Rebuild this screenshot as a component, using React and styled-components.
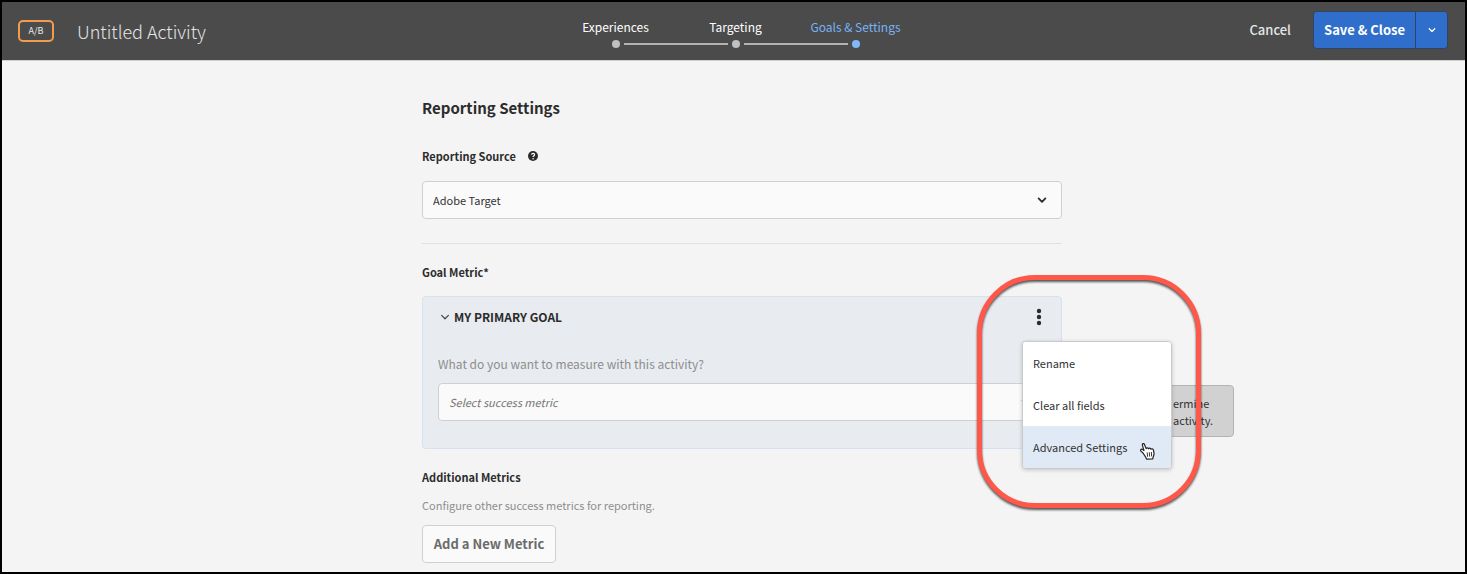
import React from "react";
import styled, { createGlobalStyle, css } from "styled-components";

const GlobalStyle = createGlobalStyle`
  *, *::before, *::after { box-sizing: border-box; }
  body {
    margin: 0;
    background: #f4f4f4;
    color: #323232;
    font-family: "Noto Sans CJK SC", "Open Sans", sans-serif;
    font-size: 12px;
    line-height: 20px;
  }
  button, select { font: inherit; color: inherit; }
  h1, h2, h3, p, ol, ul { margin: 0; padding: 0; }
  ol, ul { list-style: none; }
`;

const Frame = styled.div`
  display: flex;
  flex-direction: column;
  min-height: 100vh;
  border: 2px solid #000;
  background: #f4f4f4;
`;

const Header = styled.header`
  display: grid;
  grid-template-columns: 1fr auto 1fr;
  align-items: center;
  height: 59px;
  padding: 0 17px 0 16px;
  background: #4b4b4b;
  border-bottom: 1px solid #d0d0d0;
`;

const Identity = styled.div`
  display: flex;
  align-items: center;
  gap: 23px;
`;

const TypeBadge = styled.span`
  display: flex;
  align-items: center;
  justify-content: center;
  width: 36px;
  height: 22px;
  border: 2px solid #f29d4e;
  border-radius: 5px;
  color: #e8e8e8;
  font-size: 9px;
`;

const ActivityName = styled.h1`
  color: #e4e4e4;
  font-size: 18px;
  font-weight: 300;
  line-height: 28px;
`;

const Steps = styled.ol`
  display: flex;
  padding: 2px 0 0 5px;
`;

const Step = styled.li`
  display: grid;
  grid-template-columns: 1fr 8px 1fr;
  align-items: center;
  justify-items: center;
  width: 120px;
  color: ${(p) => (p.$current ? "#78b2f6" : "#fff")};
`;

const StepLabel = styled.span`
  grid-column: 1 / -1;
  line-height: 22px;
  height: 24px;
  white-space: nowrap;
`;

const StepDot = styled.span`
  grid-column: 2;
  width: 8px;
  height: 8px;
  border-radius: 50%;
  background: ${(p) => (p.$current ? "#82b8fb" : "#c0c0c0")};
`;

const StepLine = styled.span`
  grid-row: 2;
  grid-column: ${(p) => (p.$side === "left" ? 1 : 3)};
  justify-self: ${(p) => (p.$side === "left" ? "start" : "end")};
  width: 52px;
  height: 2px;
  background: #b5b2b4;
`;

const Actions = styled.div`
  display: flex;
  align-items: center;
  justify-content: flex-end;
  gap: 12px;
  padding-bottom: 2px;
`;

const QuietButton = styled.button`
  padding: 0 10px;
  border: 0;
  background: none;
  color: #e6e6e6;
  font-size: 13px;
  font-weight: 500;
`;

const SplitButton = styled.div`
  display: flex;
  height: 38px;
  border: 1px solid #2f4566;
  border-radius: 4px;
  overflow: hidden;
`;

const PrimaryButton = styled.button`
  display: flex;
  align-items: center;
  justify-content: center;
  width: ${(p) => (p.$toggle ? 32 : 101)}px;
  padding: 0;
  border: 0;
  border-left: ${(p) => (p.$toggle ? "1px solid #2f4566" : "0")};
  background: #2f6fcb;
  color: #fff;
  font-size: 13px;
  font-weight: 700;
  white-space: nowrap;
`;

const Main = styled.main`
  flex: 1;
  padding: 35px 0 9px 17px;
`;

const Column = styled.div`
  width: 100%;
  max-width: 640px;
  margin: 0 auto;
`;

const SectionTitle = styled.h2`
  color: #2c2c2c;
  font-size: 15px;
  font-weight: 700;
  line-height: 24px;
  margin-bottom: 26px;
`;

const labelText = css`
  color: #2c2c2c;
  font-size: 11px;
  font-weight: 700;
  line-height: 20px;
`;

const LabelRow = styled.div`
  display: flex;
  align-items: center;
  gap: 12px;
  margin-bottom: 15px;
`;

const FieldLabel = styled.label`
  ${labelText}
`;

const GroupTitle = styled.h3`
  ${labelText}
`;

const HelpButton = styled.button`
  display: flex;
  padding: 0;
  border: 0;
  background: none;
`;

const SelectBox = styled.div`
  display: grid;
  align-items: center;
  height: 38px;
  border: 1px solid #d0d0d0;
  border-radius: 4px;
  background: #fafafa;
`;

const SelectInput = styled.select`
  grid-area: 1 / 1;
  appearance: none;
  width: 100%;
  height: 100%;
  padding: 0 36px 0 10px;
  border: 0;
  background: none;
  font-size: 11px;
  font-style: ${(p) => (p.$placeholder ? "italic" : "normal")};
  color: ${(p) => (p.$placeholder ? "#757575" : "#323232")};
`;

const SelectArrow = styled.span`
  grid-area: 1 / 1;
  justify-self: end;
  display: flex;
  padding-right: 14px;
  pointer-events: none;
`;

const Divider = styled.hr`
  height: 1px;
  margin: 24px 0 18px;
  border: 0;
  background: #e1e1e1;
`;

const GoalArea = styled.div`
  position: relative;
  margin: 14px 0 18px;
`;

const GoalPanel = styled.section`
  min-height: 153px;
  padding: 9px 15px 27px;
  border: 1px solid #d6e0ee;
  border-radius: 4px;
  background: #e8ebf0;
`;

const GoalHeader = styled.div`
  display: flex;
  align-items: center;
  justify-content: space-between;
  height: 22px;
  margin-bottom: 26px;
  padding: 0 3px 0 2px;
`;

const CollapseButton = styled.button`
  display: flex;
  align-items: center;
  gap: 4px;
  padding: 0;
  border: 0;
  background: none;
  color: #2c2c2c;
  font-size: 12px;
  font-weight: 700;
`;

const MoreButton = styled.button`
  display: flex;
  padding: 0;
  border: 0;
  background: none;
`;

const Question = styled.label`
  display: block;
  margin-bottom: 9px;
  color: #8e8e8e;
`;

const Hint = styled.p`
  margin: 8px 0 10px;
  color: #8e8e8e;
  font-size: 11px;
`;

const AddButton = styled.button`
  display: block;
  width: 134px;
  height: 38px;
  padding: 0;
  border: 1px solid #d0d0d0;
  border-radius: 4px;
  background: #fafafa;
  color: #6b6b6b;
  font-size: 13px;
  font-weight: 700;
  white-space: nowrap;
`;

const Tooltip = styled.div`
  position: absolute;
  top: 89px;
  right: -172px;
  width: 80px;
  padding: 9px 0 7px 18px;
  border: 1px solid #b4b4b4;
  border-radius: 4px;
  background: #d1d1d1;
  font-size: 11px;
  line-height: 17px;
`;

const TooltipLine = styled.span`
  display: block;
`;

const Menu = styled.ul`
  position: absolute;
  top: 45px;
  right: -110px;
  width: 150px;
  border: 1px solid #cacaca;
  border-radius: 4px;
  background: #fff;
  box-shadow: 0 1px 4px rgba(0, 0, 0, 0.2);
  overflow: hidden;
`;

const MenuItem = styled.button`
  display: block;
  width: 100%;
  height: 42px;
  padding: 0 10px;
  border: 0;
  background: ${(p) => (p.$active ? "#e0eaf7" : "#fff")};
  font-size: 11px;
  text-align: left;
`;

const Highlight = styled.div`
  position: absolute;
  top: -21px;
  right: -139px;
  width: 224px;
  height: 233px;
  border: 5px solid #ff584b;
  border-radius: 58px;
  filter: drop-shadow(0 2px 1px rgba(0, 0, 0, 0.65));
  pointer-events: none;
`;

const Pointer = styled.svg`
  position: absolute;
  top: 146px;
  right: -94px;
  pointer-events: none;
`;

function Chevron({ size = 10, color = "#2c2c2c", weight = 1.8 }) {
  return (
    <svg width={size} height={size} viewBox="0 0 10 10" fill="none" aria-hidden="true">
      <path d="M1.6 3.4 5 6.8 8.4 3.4" stroke={color} strokeWidth={weight} strokeLinecap="round" strokeLinejoin="round" />
    </svg>
  );
}

const steps = ["Experiences", "Targeting", "Goals & Settings"];
const menuItems = ["Rename", "Clear all fields", "Advanced Settings"];

export default function App() {
  const last = steps.length - 1;
  return (
    <>
      <GlobalStyle />
      <Frame>
        <Header>
          <Identity>
            <TypeBadge>A/B</TypeBadge>
            <ActivityName>Untitled Activity</ActivityName>
          </Identity>
          <Steps>
            {steps.map((label, i) => (
              <Step key={label} $current={i === last} aria-current={i === last ? "step" : undefined}>
                <StepLabel>{label}</StepLabel>
                {i > 0 && <StepLine $side="left" />}
                <StepDot $current={i === last} />
                {i < last && <StepLine $side="right" />}
              </Step>
            ))}
          </Steps>
          <Actions>
            <QuietButton type="button">Cancel</QuietButton>
            <SplitButton>
              <PrimaryButton type="button">Save &amp; Close</PrimaryButton>
              <PrimaryButton type="button" $toggle aria-label="More save options">
                <Chevron size={8} color="#fff" weight={1.6} />
              </PrimaryButton>
            </SplitButton>
          </Actions>
        </Header>
        <Main>
          <Column>
            <SectionTitle>Reporting Settings</SectionTitle>
            <LabelRow>
              <FieldLabel htmlFor="source">Reporting Source</FieldLabel>
              <HelpButton type="button" aria-label="Help">
                <svg width="10" height="10" viewBox="0 0 10 10" fill="none" aria-hidden="true">
                  <circle cx="5" cy="5" r="5" fill="#2c2c2c" />
                  <path d="M3.5 3.6C3.7 2 6.6 2 6.6 3.7 6.6 4.8 5.1 4.7 5.1 6" stroke="#fff" strokeWidth="1.2" />
                  <circle cx="5.1" cy="7.7" r="0.8" fill="#fff" />
                </svg>
              </HelpButton>
            </LabelRow>
            <SelectBox>
              <SelectInput id="source" defaultValue="target">
                <option value="target">Adobe Target</option>
              </SelectInput>
              <SelectArrow><Chevron /></SelectArrow>
            </SelectBox>
            <Divider />
            <GroupTitle>Goal Metric*</GroupTitle>
            <GoalArea>
              <GoalPanel>
                <GoalHeader>
                  <CollapseButton type="button" aria-expanded="true">
                    <Chevron color="#4b4b4b" weight={1.3} />
                    MY PRIMARY GOAL
                  </CollapseButton>
                  <MoreButton type="button" aria-label="Goal options">
                    <svg width="8" height="18" viewBox="0 0 8 18" fill="#2c2c2c" aria-hidden="true">
                      <circle cx="4" cy="3" r="2.2" />
                      <circle cx="4" cy="9" r="2.2" />
                      <circle cx="4" cy="15" r="2.2" />
                    </svg>
                  </MoreButton>
                </GoalHeader>
                <Question htmlFor="metric">What do you want to measure with this activity?</Question>
                <SelectBox>
                  <SelectInput id="metric" $placeholder defaultValue="">
                    <option value="">Select success metric</option>
                  </SelectInput>
                  <SelectArrow><Chevron /></SelectArrow>
                </SelectBox>
              </GoalPanel>
              <Tooltip role="tooltip">
                <TooltipLine>ermine</TooltipLine>
                <TooltipLine>activity.</TooltipLine>
              </Tooltip>
              <Menu>
                {menuItems.map((item, i) => (
                  <li key={item}>
                    <MenuItem type="button" $active={i === menuItems.length - 1}>{item}</MenuItem>
                  </li>
                ))}
              </Menu>
              <Highlight />
              <Pointer width="17" height="19" viewBox="0 0 17 19" aria-hidden="true">
                <path
                  d="M4.2 11.2 2.2 9.4C.6 8 2.2 6.5 3.8 7.6L5 8.6 3.4 3.2C2.9 1.5 4.9.9 5.5 2.5L7.1 6.6C7.4 5.5 9.1 5.5 9.5 6.8 9.9 5.8 11.5 6 11.9 7.2 12.5 6.4 14.1 6.8 14.5 8.2L15 11.3C15.3 13.3 14 14.3 13.8 16.8L7.6 17.2C7.2 15.2 5.2 13.3 4.2 11.2Z"
                  fill="#fff" stroke="#222" strokeWidth="1.2" strokeLinejoin="round"
                />
                <path d="M8.2 10.8 8.6 14.4M10.3 10.6 10.6 14.2M12.4 10.4 12.6 14" stroke="#222" strokeWidth="0.9" strokeLinecap="round" />
              </Pointer>
            </GoalArea>
            <GroupTitle>Additional Metrics</GroupTitle>
            <Hint>Configure other success metrics for reporting.</Hint>
            <AddButton type="button">Add a New Metric</AddButton>
          </Column>
        </Main>
      </Frame>
    </>
  );
}
